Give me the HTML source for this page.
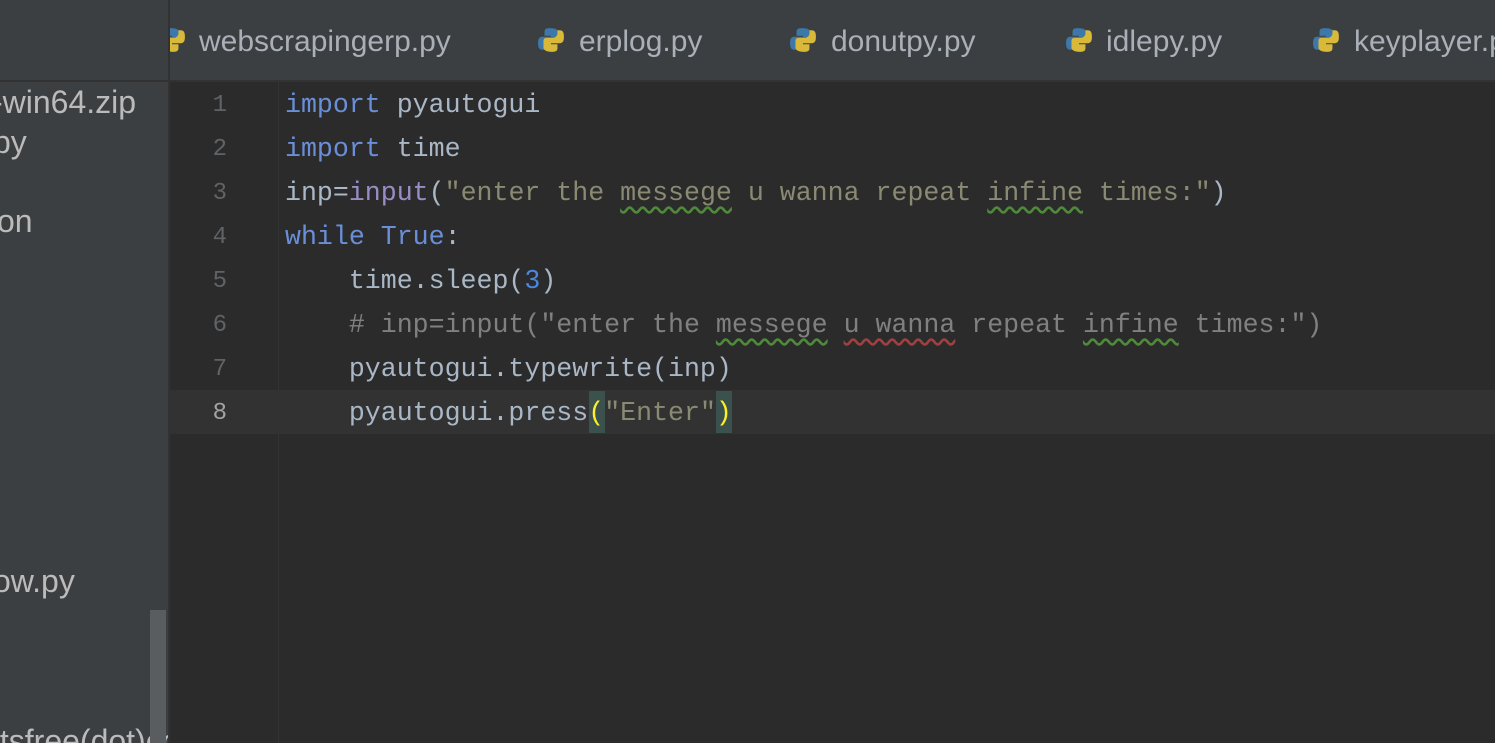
<!DOCTYPE html><html><head><style>
html,body{margin:0;width:1495px;height:743px;overflow:hidden}
body{background:#2b2b2b;position:relative;font-family:"Liberation Sans",sans-serif}
.a{position:absolute}
#side{left:0;top:0;width:168px;height:743px;background:#3c3f41;overflow:hidden}
#tabs{left:170px;top:0;width:1325px;height:80px;background:#3c3f41;border-bottom:2px solid #323232;overflow:hidden}
.st{color:#bbbbbb;font-size:32px;white-space:nowrap}
.tab{color:#a9b0b7;font-size:30px;white-space:nowrap;top:25px}
.code{font-family:"Liberation Mono",monospace;font-size:26.6px;white-space:pre;color:#a9b7c6;left:285px}
.ln{font-family:"Liberation Mono",monospace;font-size:24px;color:#606366;left:200px;width:27px;text-align:right}
.k{color:#6a8fd8}.s{color:#8a8a73}.n{color:#4a88e0}.f{color:#9a8cc4}
.w{text-decoration:underline wavy #4e8a3a;text-underline-offset:6px}
.wr{text-decoration:underline wavy #a04040;text-underline-offset:6px}
</style></head><body>
<div class="a" id="side">
<div class="a st" style="left:-8px;top:84px">-win64.zip</div>
<div class="a st" style="left:-7px;top:124px">py</div>
<div class="a st" style="left:-3px;top:203px">on</div>
<div class="a st" style="left:-7px;top:563px">ow.py</div>
<div class="a st" style="left:-9px;top:723px">ttsfree(dot)co</div>
<div class="a" style="left:150px;top:610px;width:16px;height:133px;background:#5a5d5f"></div>
</div>
<div class="a" style="left:168px;top:0;width:2px;height:743px;background:#323232"></div>
<div class="a" style="left:0;top:80px;width:168px;height:2px;background:#323232"></div>
<div class="a" id="tabs">
<svg class="a" style="left:-12px;top:26px" width="28" height="28" viewBox="0 0 26 26"><path d="M12 2c-5 0-5 2-5 4v3h6v1H5c-3 0-4 2-4 6s1 6 4 6h2v-3c0-2 2-4 4-4h6c2 0 3-1 3-3V6c0-2-2-4-8-4z" fill="#3c78aa"/><path d="M14 24c5 0 5-2 5-4v-3h-6v-1h8c3 0 4-2 4-6s-1-6-4-6h-2v3c0 2-2 4-4 4H9c-2 0-3 1-3 3v6c0 2 2 4 8 4z" fill="#d9b93a"/></svg>
<div class="a tab" style="left:29px">webscrapingerp.py</div>
<svg class="a" style="left:367px;top:26px" width="28" height="28" viewBox="0 0 26 26"><path d="M12 2c-5 0-5 2-5 4v3h6v1H5c-3 0-4 2-4 6s1 6 4 6h2v-3c0-2 2-4 4-4h6c2 0 3-1 3-3V6c0-2-2-4-8-4z" fill="#3c78aa"/><path d="M14 24c5 0 5-2 5-4v-3h-6v-1h8c3 0 4-2 4-6s-1-6-4-6h-2v3c0 2-2 4-4 4H9c-2 0-3 1-3 3v6c0 2 2 4 8 4z" fill="#d9b93a"/></svg>
<div class="a tab" style="left:409px">erplog.py</div>
<svg class="a" style="left:619px;top:26px" width="28" height="28" viewBox="0 0 26 26"><path d="M12 2c-5 0-5 2-5 4v3h6v1H5c-3 0-4 2-4 6s1 6 4 6h2v-3c0-2 2-4 4-4h6c2 0 3-1 3-3V6c0-2-2-4-8-4z" fill="#3c78aa"/><path d="M14 24c5 0 5-2 5-4v-3h-6v-1h8c3 0 4-2 4-6s-1-6-4-6h-2v3c0 2-2 4-4 4H9c-2 0-3 1-3 3v6c0 2 2 4 8 4z" fill="#d9b93a"/></svg>
<div class="a tab" style="left:661px">donutpy.py</div>
<svg class="a" style="left:895px;top:26px" width="28" height="28" viewBox="0 0 26 26"><path d="M12 2c-5 0-5 2-5 4v3h6v1H5c-3 0-4 2-4 6s1 6 4 6h2v-3c0-2 2-4 4-4h6c2 0 3-1 3-3V6c0-2-2-4-8-4z" fill="#3c78aa"/><path d="M14 24c5 0 5-2 5-4v-3h-6v-1h8c3 0 4-2 4-6s-1-6-4-6h-2v3c0 2-2 4-4 4H9c-2 0-3 1-3 3v6c0 2 2 4 8 4z" fill="#d9b93a"/></svg>
<div class="a tab" style="left:936px">idlepy.py</div>
<svg class="a" style="left:1142px;top:26px" width="28" height="28" viewBox="0 0 26 26"><path d="M12 2c-5 0-5 2-5 4v3h6v1H5c-3 0-4 2-4 6s1 6 4 6h2v-3c0-2 2-4 4-4h6c2 0 3-1 3-3V6c0-2-2-4-8-4z" fill="#3c78aa"/><path d="M14 24c5 0 5-2 5-4v-3h-6v-1h8c3 0 4-2 4-6s-1-6-4-6h-2v3c0 2-2 4-4 4H9c-2 0-3 1-3 3v6c0 2 2 4 8 4z" fill="#d9b93a"/></svg>
<div class="a tab" style="left:1184px">keyplayer.py</div>
</div>
<div class="a" style="left:278px;top:82px;width:1px;height:661px;background:#313335"></div>
<div class="a" style="left:170px;top:390px;width:1325px;height:44px;background:#323232"></div>

<div class="a ln" style="top:92px">1</div>
<div class="a ln" style="top:136px">2</div>
<div class="a ln" style="top:180px">3</div>
<div class="a ln" style="top:224px">4</div>
<div class="a ln" style="top:268px">5</div>
<div class="a ln" style="top:312px">6</div>
<div class="a ln" style="top:356px">7</div>
<div class="a ln" style="top:400px;color:#a4a3a3">8</div>

<div class="a code" style="top:90px"><span class="k">import</span> pyautogui</div>
<div class="a code" style="top:134px"><span class="k">import</span> time</div>
<div class="a code" style="top:178px">inp=<span class="f">input</span>(<span class="s">"enter the <span class="w">messege</span> u wanna repeat <span class="w">infine</span> times:"</span>)</div>
<div class="a code" style="top:222px"><span class="k">while</span> <span class="k">True</span>:</div>
<div class="a code" style="top:266px">    time.sleep(<span class="n">3</span>)</div>
<div class="a code" style="top:310px;color:#808080">    # inp=input("enter the <span class="w">messege</span> <span class="wr">u wanna</span> repeat <span class="w">infine</span> times:")</div>
<div class="a code" style="top:354px">    pyautogui.typewrite(inp)</div>
<div class="a" style="left:589px;top:391px;width:16px;height:42px;background:#3b514d"></div>
<div class="a" style="left:716px;top:391px;width:16px;height:42px;background:#3b514d"></div>
<div class="a code" style="top:398px">    pyautogui.press<span style="color:#ffef28">(</span><span class="s">"Enter"</span><span style="color:#ffef28">)</span></div>
</body></html>
